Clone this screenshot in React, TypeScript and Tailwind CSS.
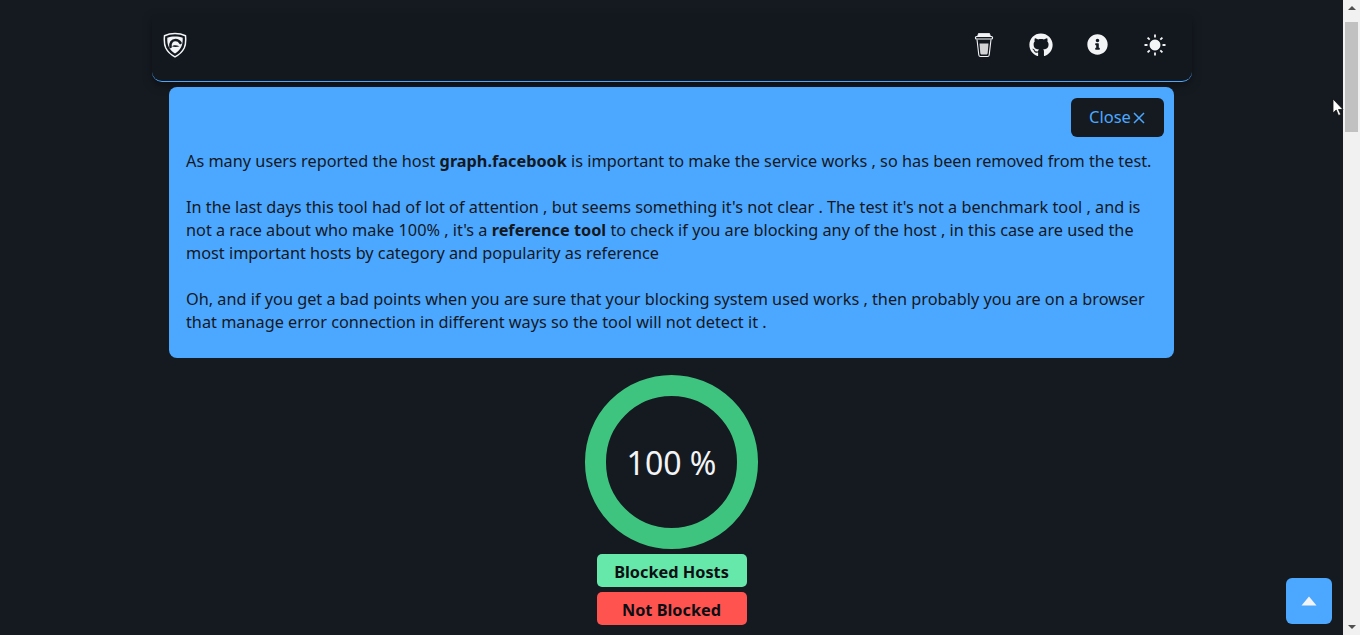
import { FaGithub, FaInfoCircle } from "react-icons/fa";

function Shield() {
  return (
    <svg width="24" height="26" viewBox="0 0 24 26" className="block">
      <path d="M12 1.500C8.500 1.500 4.500 2.300 1.500 3.700C1 9 1.200 12.500 2.800 16C4.500 19.500 8 22.800 12 24.800C16 22.800 19.500 19.500 21.200 16C22.800 12.500 23 9 22.500 3.700C19.500 2.300 15.500 1.500 12 1.500Z" fill="none" stroke="#f3f4f6" strokeWidth="1.500" />
      <path d="M12 4.500C9 4.500 6.500 5 4.300 5.800C4.200 9.500 4.500 12.500 5.800 15C7.200 17.800 9.500 20 12 21.500C14.500 20 16.800 17.800 18.200 15C19.500 12.500 19.800 9.500 19.700 5.800C17.500 5 15 4.500 12 4.500Z" fill="#f3f4f6" />
      <path d="M7.500 15C6.800 11 9 8 12.500 8C14.800 8 16.500 9.300 17.500 11" fill="none" stroke="#151a21" strokeWidth="2.600" strokeLinecap="round" />
      <path d="M9 14.500C10.500 12.800 13 12.800 16.500 14.200C14.500 15 12 15.300 9 14.500Z" fill="#151a21" />
    </svg>
  );
}

function Cup() {
  return (
    <svg width="20" height="26" viewBox="0 0 20 26" className="block" fill="none" stroke="#f3f4f6">
      <path d="M4.500 1.500H15.500L16.500 4.500H3.500Z" fill="#f3f4f6" strokeWidth="0.800" />
      <rect x="1.500" y="4.500" width="17" height="2.500" rx="1" fill="#151a21" strokeWidth="1.200" />
      <path d="M3 7.500L4.800 23C4.900 24 5.600 24.500 6.500 24.500H13.500C14.400 24.500 15.100 24 15.200 23L17 7.500" strokeWidth="1.100" />
      <path d="M5.500 11.500H14.500L13.700 21C13.600 21.900 13.100 22.500 12.400 22.500H7.600C6.900 22.500 6.400 21.900 6.300 21Z" fill="#f3f4f6" fillOpacity="0.85" stroke="none" />
    </svg>
  );
}

function Sun() {
  return (
    <svg width="24" height="24" viewBox="0 0 24 24" className="block" fill="#f3f4f6" stroke="#f3f4f6" strokeWidth="1.800">
      <circle cx="12" cy="12" r="5" stroke="none" fill="#f3f4f6" />
      <circle cx="12" cy="12" r="5.200" strokeWidth="0.500" />
      <path d="M12 1.500V4.500M12 19.500V22.500M1.500 12H4.500M19.500 12H22.500M4.600 4.600L6.700 6.700M17.300 17.300L19.400 19.400M4.600 19.400L6.700 17.300M17.300 6.700L19.400 4.600" />
    </svg>
  );
}

function CursorMark() {
  return (
    <svg width="12" height="19" viewBox="0 0 12 19" className="absolute left-[1332px] top-[98px]">
      <path d="M1 1V15L4.200 12L6.500 17.500L8.800 16.500L6.500 11.500H11Z" fill="#ffffff" stroke="#111111" strokeWidth="0.800" />
    </svg>
  );
}

export default function App() {
  return (
    <div className="relative flex h-[635px] w-full overflow-hidden bg-[#151a21] font-['Noto_Sans',sans-serif] text-[#14181f]">
      <main className="flex min-w-0 flex-1 flex-col items-center pt-[14px]">
        <nav className="flex h-[68px] w-[1040px] shrink-0 items-center justify-between rounded-b-[10px] border-b border-[#4ca8ff] bg-[#13181f] pb-[6px] pl-[11px] pr-[25px] shadow-[0_4px_10px_rgba(0,0,0,0.35)]">
          <Shield />
          <div className="flex items-center gap-[33px] text-[#f3f4f6]">
            <div className="flex w-[24px] justify-center"><Cup /></div>
            <div className="flex w-[24px] justify-center"><FaGithub className="h-[24px] w-[24px]" /></div>
            <div className="flex w-[24px] justify-center"><FaInfoCircle className="h-[21px] w-[21px]" /></div>
            <div className="flex w-[24px] justify-center"><Sun /></div>
          </div>
        </nav>

        <section className="mt-[5px] flex h-[271px] w-[1005px] shrink-0 flex-col rounded-lg bg-[#4ca8ff] pl-[17px] pr-[10px] pt-[11px]">
          <button className="flex h-[39px] w-[93px] items-center justify-center gap-[1px] self-end rounded-md bg-[#151a21] text-[16.5px] leading-[37px] text-[#4ca8ff]">
            <span className="relative -top-px">Close</span>
            <svg width="14" height="14" viewBox="0 0 14 14" fill="none" stroke="#4ca8ff" strokeWidth="1.500">
              <path d="M2 2L12 12M12 2L2 12" />
            </svg>
          </button>
          <div className="mt-[13px] w-[970px] text-[16.27px] leading-[23px]">
            <p>
              As many users reported the host <b>graph.facebook</b> is important to make the service works , so has been removed from the test.
            </p>
            <p className="mt-[23px]">
              In the last days this tool had of lot of attention , but seems something it's not clear . The test it's not a benchmark tool , and is not a race about who make 100% , it's a <b>reference tool</b> to check if you are blocking any of the host , in this case are used the most important hosts by category and popularity as reference
            </p>
            <p className="mt-[23px]">
              Oh, and if you get a bad points when you are sure that your blocking system used works , then probably you are on a browser that manage error connection in different ways so the tool will not detect it .
            </p>
          </div>
        </section>

        <div className="mt-[17px] flex h-[174px] w-[173px] shrink-0 items-center justify-center rounded-full border-[21px] border-[#3ec47e] text-[32px] text-[#f3f4f6]">
          <span className="relative top-px">100 %</span>
        </div>

        <div className="mt-[5px] flex h-[33px] w-[150px] shrink-0 items-center justify-center rounded-[5px] bg-[#66e8aa] pt-[4px] text-[16.3px] font-bold text-[#0b0f14]">
          Blocked Hosts
        </div>
        <div className="mt-[5px] flex h-[33px] w-[150px] shrink-0 items-center justify-center rounded-[5px] bg-[#ff5350] pt-[4px] text-[16.3px] font-bold text-[#0b0f14]">
          Not Blocked
        </div>
      </main>

      <aside className="flex w-[17px] shrink-0 flex-col items-center justify-between bg-[#f1f1f1] py-[6px]">
        <div className="h-0 w-0 border-x-[4px] border-b-[4px] border-x-transparent border-b-[#505050]" />
        <div className="h-0 w-0 border-x-[4px] border-t-[4px] border-x-transparent border-t-[#505050]" />
      </aside>
      <div className="absolute left-[1345px] top-[22px] h-[110px] w-[13px] bg-[#c1c1c1]" />

      <button className="absolute left-[1286px] top-[578px] flex h-[46px] w-[46px] items-center justify-center rounded-md bg-[#4ca8ff]">
        <svg width="16" height="10" viewBox="0 0 16 10"><path d="M8 0.500L15.500 9.500H0.500Z" fill="#f3f4f6" /></svg>
      </button>
      <CursorMark />
    </div>
  );
}
